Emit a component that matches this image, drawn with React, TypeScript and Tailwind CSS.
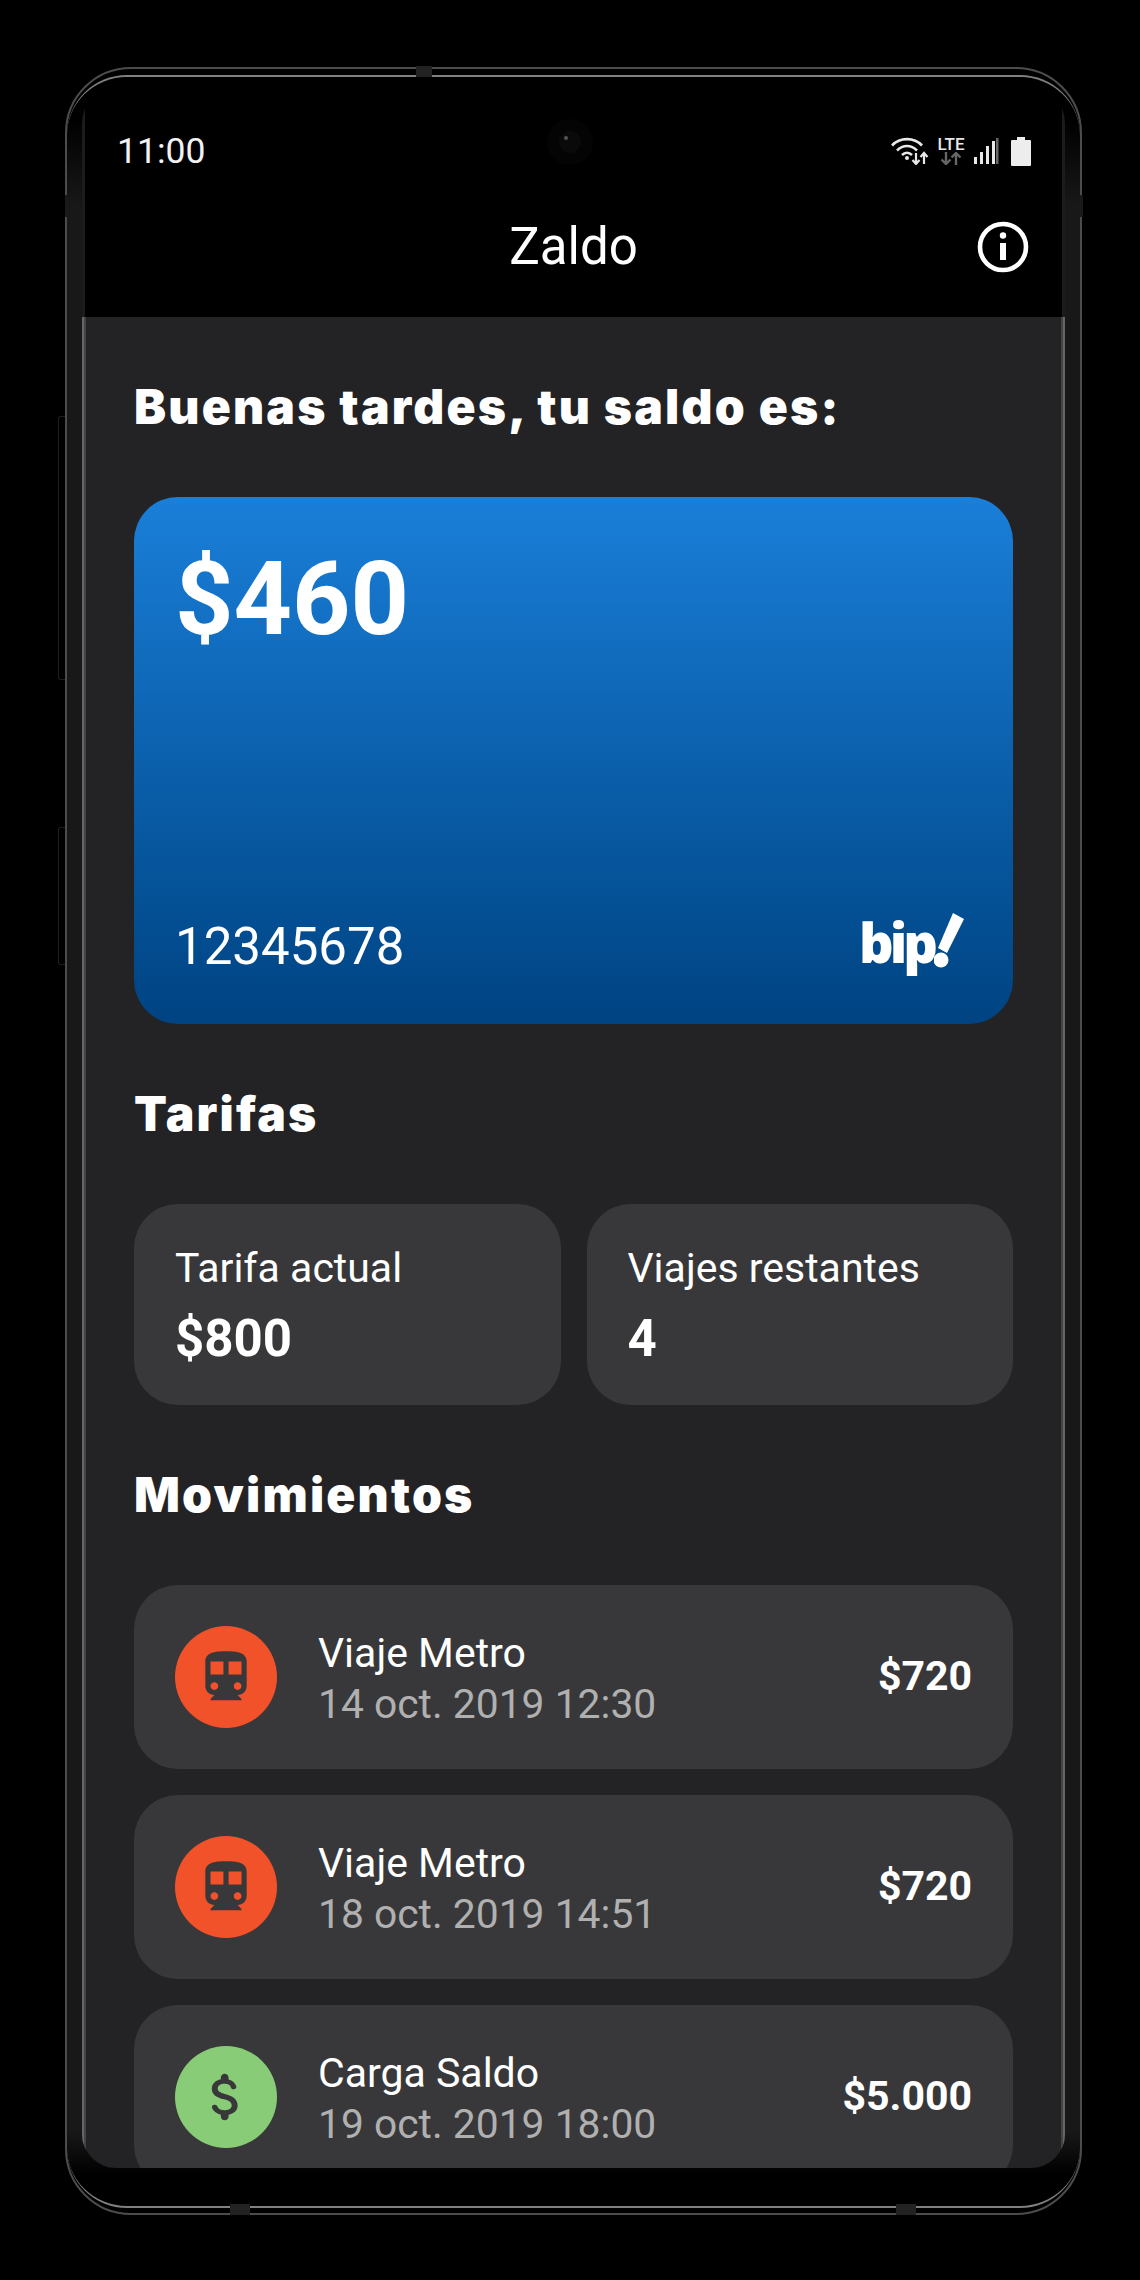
const roboto = { fontFamily: "Roboto, sans-serif" };

const TRAIN =
  "M12 2c-4.42 0-8 .5-8 4v9.5C4 17.43 5.57 19 7.5 19L6 20.5v.5h12v-.5L16.5 19c1.93 0 3.5-1.57 3.5-3.5V6c0-3.5-3.58-4-8-4zM7.5 17c-.83 0-1.5-.67-1.5-1.5S6.67 14 7.5 14s1.5.67 1.5 1.5S8.33 17 7.5 17zm3.5-6H6V6h5v5zm5.5 6c-.83 0-1.5-.67-1.5-1.5s.67-1.5 1.5-1.5 1.5.67 1.5 1.5-.67 1.5-1.5 1.5zm1.5-6h-5V6h5v5z";
const DOLLAR =
  "M11.8 10.9c-2.27-.59-3-1.2-3-2.15 0-1.09 1.01-1.85 2.7-1.85 1.42 0 2.13.54 2.39 1.4.12.4.45.7.87.7h.3c.66 0 1.13-.65.9-1.27-.42-1.18-1.4-2.16-2.96-2.54V4.5c0-.83-.67-1.5-1.5-1.5S10 3.67 10 4.5v.66c-1.94.42-3.5 1.68-3.5 3.61 0 2.31 1.91 3.46 4.7 4.13 2.5.6 3 1.48 3 2.41 0 .69-.49 1.79-2.7 1.79-1.65 0-2.5-.59-2.83-1.43-.15-.39-.49-.67-.9-.67h-.28c-.67 0-1.14.68-.89 1.3.57 1.39 1.9 2.21 3.4 2.53v.67c0 .83.67 1.5 1.5 1.5s1.5-.67 1.5-1.5v-.65c1.95-.37 3.5-1.5 3.5-3.55 0-2.84-2.43-3.81-4.7-4.4z";

const moves = [
  { title: "Viaje Metro", date: "14 oct. 2019 12:30", amount: "$720", icon: TRAIN, bg: "bg-[#f2522a]" },
  { title: "Viaje Metro", date: "18 oct. 2019 14:51", amount: "$720", icon: TRAIN, bg: "bg-[#f2522a]" },
  { title: "Carga Saldo", date: "19 oct. 2019 18:00", amount: "$5.000", icon: DOLLAR, bg: "bg-[#89cc77]" },
];

function Heading({ children, className }: { children: string; className: string }) {
  return (
    <h2
      className={`h-[60px] text-[48px] leading-[60px] font-black tracking-[2.2px] text-white ${className}`}
      style={{ fontFamily: "Inter, sans-serif" }}
    >
      {children}
    </h2>
  );
}

function StatusIcons() {
  return (
    <div className="flex items-start">
      <svg width="38" height="28" viewBox="0 0 38 28" className="text-[#e8e8e8]" fill="none" stroke="currentColor">
        <path d="M1 8.5C9 0 23 0 31 8.5" strokeWidth="2.6" />
        <path d="M6 13.5C12 7.5 20 7.5 26 13.5" strokeWidth="2.6" />
        <path d="M11 18c3-3 7-3 10 0" strokeWidth="2.6" />
        <circle cx="16" cy="21" r="2" fill="currentColor" stroke="none" />
        <path d="M25 16v10M21.5 23l3.5 4 3.5-4M33 27V17M29.5 20l3.5-4 3.5 4" strokeWidth="2.2" />
      </svg>
      <div className="ml-[8px] flex w-[28px] flex-col items-center">
        <span className="h-[15px] text-[17px] leading-[15px] font-medium text-[#e8e8e8]" style={roboto}>
          LTE
        </span>
        <svg width="22" height="13" viewBox="0 0 22 13" fill="none" stroke="#666" strokeWidth="2.4">
          <path d="M6 0v11M1.5 7.5 6 12l4.5-4.5M16 13V2M11.5 5.5 16 1l4.5 4.5" />
        </svg>
      </div>
      <svg width="25" height="28" viewBox="0 0 25 28" className="ml-[9px]">
        <rect x="0" y="20" width="3" height="7" fill="#e8e8e8" />
        <rect x="6" y="15" width="3" height="12" fill="#e8e8e8" />
        <rect x="12" y="9" width="3" height="18" fill="#e8e8e8" />
        <rect x="18" y="4" width="3" height="23" fill="#e8e8e8" />
        <rect x="22" y="1" width="2.5" height="26" fill="#666" />
      </svg>
      <svg width="20" height="29" viewBox="0 0 20 29" className="ml-[12px]">
        <path d="M6 0h8v3h5a1 1 0 0 1 1 1v24a1 1 0 0 1-1 1H1a1 1 0 0 1-1-1V4a1 1 0 0 1 1-1h5z" fill="#ededed" />
      </svg>
    </div>
  );
}

function BipLogo() {
  return (
    <div className="flex h-[62px] items-start">
      <span
        className="mt-[-13px] text-[54px] leading-[78px] font-extrabold tracking-[-4px] text-white"
        style={{ fontFamily: "'Open Sans', sans-serif" }}
      >
        bip
      </span>
      <svg width="32" height="56" viewBox="0 0 32 56" className="mt-[-3px]">
        <polygon points="19,0 30,6 13,40 4,35" fill="#fff" />
        <circle cx="7" cy="47" r="7.5" fill="#fff" />
      </svg>
    </div>
  );
}

function Move({ m }: { m: (typeof moves)[number] }) {
  return (
    <div className="flex h-[184px] shrink-0 items-center rounded-[44px] bg-[#38383a] pr-[41px] pl-[41px]">
      <div className={`flex size-[102px] items-center justify-center rounded-full ${m.bg}`}>
        <svg width="62" height="62" viewBox="0 0 24 24" fill="#38383a">
          <path d={m.icon} />
        </svg>
      </div>
      <div className="mt-[4px] ml-[41px] flex-1">
        <div className="text-[41px] leading-[51px] text-white">{m.title}</div>
        <div className="text-[40.8px] leading-[51px] text-[#b0b0b0]">{m.date}</div>
      </div>
      <div className="text-[41px] font-bold text-white">{m.amount}</div>
    </div>
  );
}

export default function App() {
  return (
    <div className="relative h-[2280px] w-[1140px] overflow-hidden bg-black pt-[67px] pl-[65px]" style={roboto}>
      {/* side buttons and frame seams */}
      <div className="absolute top-[416px] left-[58px] h-[264px] w-[7px] rounded-l-[3px] border border-r-0 border-[#1e1e1e]" />
      <div className="absolute top-[827px] left-[58px] h-[138px] w-[7px] rounded-l-[3px] border border-r-0 border-[#1e1e1e]" />
      <div className="absolute top-[66px] left-[416px] z-10 h-[11px] w-[16px] bg-[#222]" />
      <div className="absolute top-[2204px] left-[230px] z-10 h-[11px] w-[20px] bg-[#222]" />
      <div className="absolute top-[2204px] left-[896px] z-10 h-[11px] w-[20px] bg-[#222]" />
      <div className="absolute top-[195px] left-[65px] z-10 h-[22px] w-[3px] bg-[#1a1a1a]" />
      <div className="absolute top-[195px] left-[1080px] z-10 h-[22px] w-[3px] bg-[#1a1a1a]" />

      <div className="h-[2148px] w-[1017px] rounded-[66px] border-2 border-[#4c4c4c] pt-[6px] pb-[5px]">
        <div className="flex h-full flex-col overflow-hidden rounded-[60px] border-y-2 border-[#808080] bg-[linear-gradient(to_bottom,#000_2%,#181818_6%,#181818_96.5%,#000_98.5%)]">
          <div className="mx-[15px] flex h-[2091px] shrink-0 flex-col overflow-hidden rounded-t-[48px] rounded-b-[34px] bg-black">
            <header className="relative flex h-[240px] shrink-0 flex-col border-x-[3px] border-[#1c1c1c] bg-black pt-[52px] text-white">
              <div className="flex h-[44px] items-center justify-between pr-[31px] pl-[32px]">
                <span className="text-[35.5px] leading-[44px] text-[#f2f2f2]">11:00</span>
                <StatusIcons />
              </div>
              <div className="relative mt-[42px] text-center text-[51px] leading-[64px]">
                Zaldo
                <svg width="60" height="60" viewBox="0 0 60 60" className="absolute top-[2px] right-[29px]" fill="none">
                  <circle cx="30" cy="30" r="23" stroke="#fff" strokeWidth="4.6" />
                  <circle cx="30" cy="18.5" r="3.2" fill="#fff" />
                  <rect x="27" y="26" width="6" height="17" fill="#fff" />
                </svg>
              </div>
              {/* front camera */}
              <div className="absolute top-[42px] left-[462px] flex size-[46px] items-center justify-center rounded-full bg-[#040404]">
                <div className="size-[22px] rounded-full bg-[#0a0a0a] p-[5px]">
                  <div className="size-[4px] rounded-full bg-[#555]" />
                </div>
              </div>
            </header>

            <main className="flex min-h-0 flex-1 flex-col overflow-hidden bg-[#232325] px-[52px] pt-[60px] shadow-[inset_2px_0_0_#666,inset_4px_0_0_#444,inset_-2px_0_0_#666,inset_-4px_0_0_#444]">
              <Heading className="mb-[60px]">Buenas tardes, tu saldo es:</Heading>

              <section className="flex h-[527px] shrink-0 flex-col justify-between rounded-[44px] bg-gradient-to-b from-[#1a7fd9] to-[#004382] pr-[47px] pb-[44px] pl-[41px]">
                <div className="mt-[44px] text-[102px] leading-[116px] font-bold text-white">$460</div>
                <div className="flex items-center justify-between">
                  <span className="text-[51px] leading-[66px] text-white">12345678</span>
                  <BipLogo />
                </div>
              </section>

              <Heading className="mt-[60px] mb-[60px]">Tarifas</Heading>

              <section className="grid h-[201px] shrink-0 grid-cols-2 gap-[26px]">
                <div className="rounded-[44px] bg-[#38383a] pt-[39px] pl-[41px] text-white">
                  <div className="text-[41px] leading-[50px]">Tarifa actual</div>
                  <div className="mt-[18px] text-[51px] leading-[56px] font-bold">$800</div>
                </div>
                <div className="rounded-[44px] bg-[#38383a] pt-[39px] pl-[41px] text-white">
                  <div className="text-[41px] leading-[50px]">Viajes restantes</div>
                  <div className="mt-[18px] text-[51px] leading-[56px] font-bold">4</div>
                </div>
              </section>

              <Heading className="mt-[60px] mb-[60px]">Movimientos</Heading>

              <section className="flex flex-col gap-[26px]">
                {moves.map((m) => (
                  <Move key={m.date} m={m} />
                ))}
              </section>
            </main>
          </div>
        </div>
      </div>
    </div>
  );
}
